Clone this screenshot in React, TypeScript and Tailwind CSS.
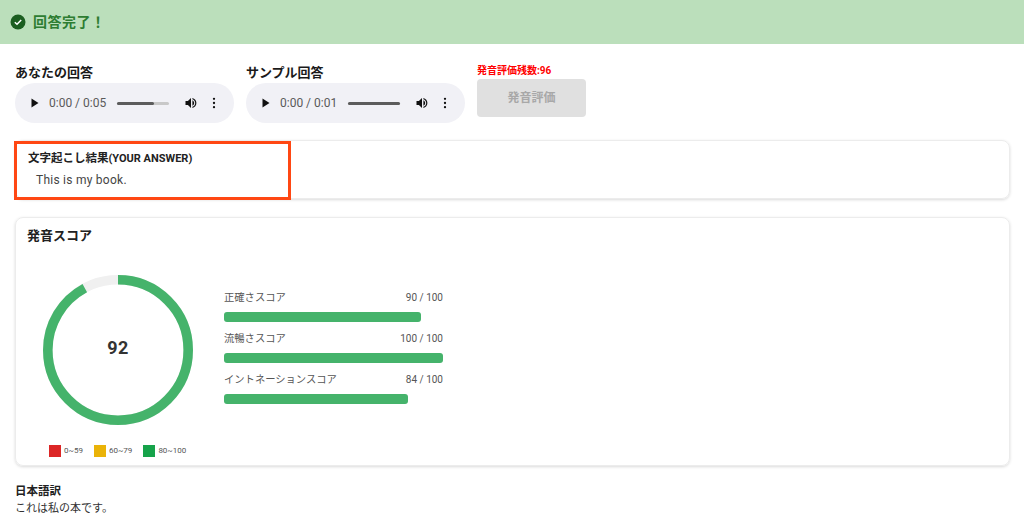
import React from 'react'

const jp = '[font-family:Roboto,"Noto_Sans_CJK_JP",sans-serif]'

function AudioPlayer({ time, fill }: { time: string; fill: number }) {
  return (
    <div className="flex h-10 w-[219px] items-center rounded-[20px] bg-[#f1f1f6] pl-[16px] text-[#5a5a5a]">
      <svg width="8" height="10" viewBox="0 0 8 10" className="shrink-0">
        <path d="M0.500 0.500v9l7-4.500z" fill="#111" />
      </svg>
      <span className="ml-[10px] w-[58px] shrink-0 whitespace-nowrap font-['Roboto',sans-serif] text-[12px]">{time}</span>
      <div className="ml-[10px] h-[3px] w-[52px] shrink-0 rounded-full bg-[#c8c8c8]">
        <div className="h-full rounded-full bg-[#5c5c5c]" style={{ width: `${fill}%` }} />
      </div>
      <svg width="12" height="12" viewBox="0 0 12 12" className="ml-[16px] shrink-0">
        <path d="M0.500 4v4h2.400l3.100 3V1L2.900 4zM7.400 3.200v5.600c1.100-.5 1.800-1.600 1.800-2.800s-.7-2.300-1.800-2.800zM7.400 1v1.200c1.600.5 2.800 2 2.800 3.800s-1.200 3.300-2.800 3.800V11c2.300-.5 4-2.600 4-5s-1.700-4.500-4-5z" fill="#111" />
      </svg>
      <svg width="4" height="12" viewBox="0 0 4 12" className="ml-[15px] shrink-0">
        <circle cx="2" cy="1.800" r="1.150" fill="#111" />
        <circle cx="2" cy="6" r="1.150" fill="#111" />
        <circle cx="2" cy="10.200" r="1.150" fill="#111" />
      </svg>
    </div>
  )
}

function ScoreBar({ label, score }: { label: string; score: number }) {
  return (
    <div className="h-[41px]">
      <div className="flex h-[24px] items-start justify-between pt-[2px] text-[#555]">
        <span className="text-[10.300px] leading-[16px]">{label}</span>
        <span className="text-[10px] leading-[16px]">{score} / 100</span>
      </div>
      <div className="h-[10px] w-full">
        <div className="h-full rounded-[3px] bg-[#45b36b]" style={{ width: `${score}%` }} />
      </div>
    </div>
  )
}

function Legend({ color, label }: { color: string; label: string }) {
  return (
    <div className="flex items-center gap-[3px]">
      <div className={`h-3 w-3 ${color}`} />
      <span className="text-[8px] leading-3 text-[#555]">{label}</span>
    </div>
  )
}

export default function App() {
  const r = 70.2
  const c = 2 * Math.PI * r

  return (
    <div className={`relative h-[514px] w-[1024px] overflow-hidden bg-white ${jp}`}>
      <div className="flex h-11 items-center gap-[7px] bg-[#bbdfbb] pl-[10px]">
        <svg width="16" height="16" viewBox="0 0 16 16">
          <circle cx="8" cy="8" r="7.500" fill="#1b5e20" />
          <path d="M4.800 8.200l2.200 2.100 4.200-4.300" fill="none" stroke="#fff" strokeWidth="1.500" />
        </svg>
        <span className="text-[14px] font-bold tracking-[0.5px] text-[#2e7d32]">回答完了！</span>
      </div>

      <div className="mt-[18px] flex items-start pl-[15px]">
        <div className="w-[231px]">
          <div className="h-[21px] text-[13px] leading-[21px] font-bold text-[#1a1a1a]">あなたの回答</div>
          <AudioPlayer time="0:00 / 0:05" fill={72} />
        </div>
        <div className="w-[231px]">
          <div className="h-[21px] text-[13px] leading-[21px] font-bold text-[#1a1a1a]">サンプル回答</div>
          <AudioPlayer time="0:00 / 0:01" fill={100} />
        </div>
        <div>
          <div className="h-[17px] text-[10px] leading-[17px] font-bold text-[#ff0000]">発音評価残数:96</div>
          <div className="flex h-[38px] w-[109px] items-center justify-center rounded-[4px] bg-[#e0e0e0] text-[12px] font-bold text-[#a8a8a8]">
            発音評価
          </div>
        </div>
      </div>

      <div className="mt-[17px] mr-[14px] ml-[15px] h-[59px] rounded-[8px] border border-[#ececec] pt-[10px] pl-3 shadow-[0_1px_3px_rgba(0,0,0,0.15)]">
        <div className="text-[11.500px] leading-[14px] font-bold text-[#222]">
          文字起こし結果<span className="text-[11px]">(YOUR ANSWER)</span>
        </div>
        <div className="mt-[6px] pl-2 text-[12px] leading-[17px] tracking-[0.25px] text-[#444]">This is my book.</div>
      </div>

      <div className="mt-[18px] mr-[14px] ml-[15px] h-[249px] rounded-[8px] border border-[#ececec] pt-2 pl-[11px] shadow-[0_1px_3px_rgba(0,0,0,0.15)]">
        <div className="h-5 text-[13px] leading-5 font-bold text-[#222]">発音スコア</div>
        <div className="mt-[29px] flex items-start">
          <div className="ml-[16px] flex w-[150px] flex-col">
            <div className="relative h-[150px] w-[150px]">
              <svg width="150" height="150" viewBox="0 0 150 150">
                <circle cx="75" cy="75" r={r} fill="none" stroke="#f0f0f0" strokeWidth="9.600" />
                <circle
                  cx="75"
                  cy="75"
                  r={r}
                  fill="none"
                  stroke="#45b36b"
                  strokeWidth="9.600"
                  strokeDasharray={`${c * 0.92} ${c}`}
                  transform="rotate(-90 75 75)"
                />
              </svg>
              <div className="absolute inset-0 flex items-center justify-center pb-[6px] text-[18px] font-bold tracking-[0.5px] text-[#333]">
                92
              </div>
            </div>
            <div className="mt-5 ml-[6px] flex gap-[11px] whitespace-nowrap">
              <Legend color="bg-[#dc2626]" label="0~59" />
              <Legend color="bg-[#eab308]" label="60~79" />
              <Legend color="bg-[#16a34a]" label="80~100" />
            </div>
          </div>
          <div className="mt-[13px] ml-[31px] w-[219px]">
            <ScoreBar label="正確さスコア" score={90} />
            <ScoreBar label="流暢さスコア" score={100} />
            <ScoreBar label="イントネーションスコア" score={84} />
          </div>
        </div>
      </div>

      <div className="mt-[17px] pl-[15px] text-[#222]">
        <div className="text-[11.500px] leading-[17px] font-bold">日本語訳</div>
        <div className="text-[11px] leading-[17px] text-[#333]">これは私の本です。</div>
      </div>

      {/* annotation drawn over the transcript card */}
      <div className="absolute top-[141px] left-[14px] h-[59px] w-[277px] border-[3px] border-[#ff4713]" />
    </div>
  )
}
